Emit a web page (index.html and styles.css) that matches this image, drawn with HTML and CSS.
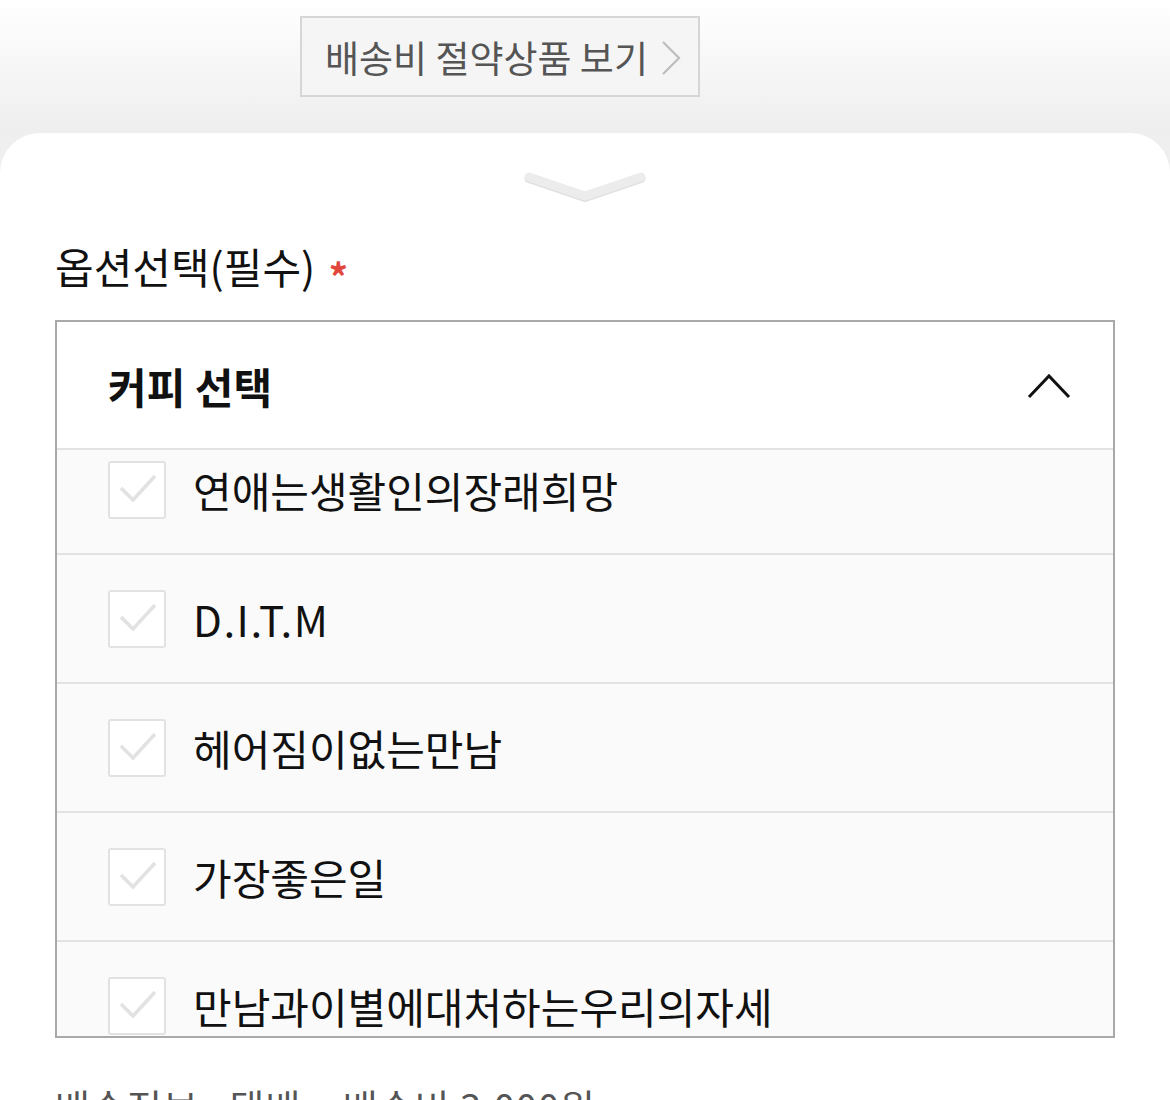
FILE: index.html
```html
<html>
  <head>
    <title>옵션선택</title>
    <meta name="viewport" content="width=device-width, initial-scale=1.0" />
    <link rel="stylesheet" href="styles.css">
  </head>
  <body>
    <div class="top">
      <a class="saveBtn" href="#">배송비 절약상품 보기
        <svg class="saveArrow" width="22" height="36" viewBox="0 0 22 36"><polyline points="3,2 19,18 3,34" fill="none" stroke="#bdbdbd" stroke-width="2.2"/></svg>
      </a>
    </div>

    <div class="sheet">
      <div class="handle">
        <svg width="124" height="36" viewBox="0 0 124 36">
          <polyline points="6,10 62,29 118,10" fill="none" stroke="#e0e0e0" stroke-width="9" stroke-linecap="round" stroke-linejoin="round" transform="translate(0,1.5)"/>
          <polyline points="6,10 62,29 118,10" fill="none" stroke="#ececec" stroke-width="9" stroke-linecap="round" stroke-linejoin="round"/>
        </svg>
      </div>

      <h2 class="titulo">옵션선택(필수) <span class="req">*</span></h2>

      <div class="caja">
        <div class="cabecera">
          <span>커피 선택</span>
          <svg width="44" height="26" viewBox="0 0 44 26"><polyline points="2,24 22,3 42,24" fill="none" stroke="#111" stroke-width="3"/></svg>
        </div>
        <div class="lista">
          <div class="opciones">
            <div class="opcion"><span class="check"><svg width="54" height="54" viewBox="0 0 54 54"><polyline points="11,25 23,37 45,13" fill="none" stroke="#e2e2e2" stroke-width="3.5"/></svg></span>연애는생활인의장래희망</div>
            <div class="opcion"><span class="check"><svg width="54" height="54" viewBox="0 0 54 54"><polyline points="11,25 23,37 45,13" fill="none" stroke="#e2e2e2" stroke-width="3.5"/></svg></span><span class="latin">D.I.T.M</span></div>
            <div class="opcion"><span class="check"><svg width="54" height="54" viewBox="0 0 54 54"><polyline points="11,25 23,37 45,13" fill="none" stroke="#e2e2e2" stroke-width="3.5"/></svg></span>헤어짐이없는만남</div>
            <div class="opcion"><span class="check"><svg width="54" height="54" viewBox="0 0 54 54"><polyline points="11,25 23,37 45,13" fill="none" stroke="#e2e2e2" stroke-width="3.5"/></svg></span>가장좋은일</div>
            <div class="opcion"><span class="check"><svg width="54" height="54" viewBox="0 0 54 54"><polyline points="11,25 23,37 45,13" fill="none" stroke="#e2e2e2" stroke-width="3.5"/></svg></span>만남과이별에대처하는우리의자세</div>
          </div>
        </div>
      </div>

      <p class="envio">배송정보 : 택배 · 배송비 3,000원</p>
    </div>
  </body>
</html>
```

FILE: styles.css
```css
body {
  margin: 0;
  background-color: #efefef;
  font-family: "Noto Sans CJK KR", "Noto Sans", sans-serif;
  color: #111;
  overflow: hidden;
}
.top {
  height: 133px;
  box-sizing: border-box;
  padding-top: 16px;
  padding-left: 300px;
  background-image: linear-gradient(#ffffff, #eeeeee);
}
.saveBtn {
  display: flex;
  align-items: center;
  gap: 12px;
  box-sizing: border-box;
  width: 400px;
  height: 81px;
  padding-left: 23px;
  border: 2px solid #d6d6d6;
  background-color: #f5f5f5;
  color: #555;
  font-size: 37px;
  text-decoration: none;
}
.saveArrow {
  margin-top: 2px;
}
.sheet {
  background-color: white;
  border-radius: 40px 40px 0 0;
  padding: 0 55px;
  height: 980px;
}
.handle {
  display: flex;
  justify-content: center;
  padding-top: 34px;
  height: 36px;
}
.titulo {
  margin: 0;
  margin-top: 35px;
  font-size: 42px;
  font-weight: normal;
  line-height: 56px;
}
.req {
  color: #e2463d;
  font-size: 38px;
  font-weight: bold;
  line-height: 0;
  margin-left: 4px;
  vertical-align: -8px;
}
.caja {
  margin-top: 26px;
  border: 2px solid #a9a9a9;
}
.cabecera {
  display: flex;
  justify-content: space-between;
  align-items: center;
  height: 126px;
  padding: 0 42px 0 51px;
  border-bottom: 2px solid #e2e2e2;
  font-size: 42px;
  font-weight: bold;
}
.cabecera svg {
  margin-top: 2px;
}
.lista {
  height: 586px;
  overflow: hidden;
  background-color: #fafafa;
}
.opciones {
  margin-top: -24px;
}
.opcion {
  display: flex;
  align-items: center;
  gap: 27px;
  height: 127px;
  padding-left: 51px;
  border-bottom: 2px solid #e2e2e2;
  font-size: 42px;
}
.latin {
  letter-spacing: 1.5px;
}
.check {
  display: flex;
  width: 54px;
  height: 54px;
  border: 2px solid #e2e2e2;
  border-radius: 3px;
  background-color: white;
}
.envio {
  margin: 0;
  margin-top: 40px;
  font-size: 38px;
  letter-spacing: 1px;
  color: #555;
}
```
